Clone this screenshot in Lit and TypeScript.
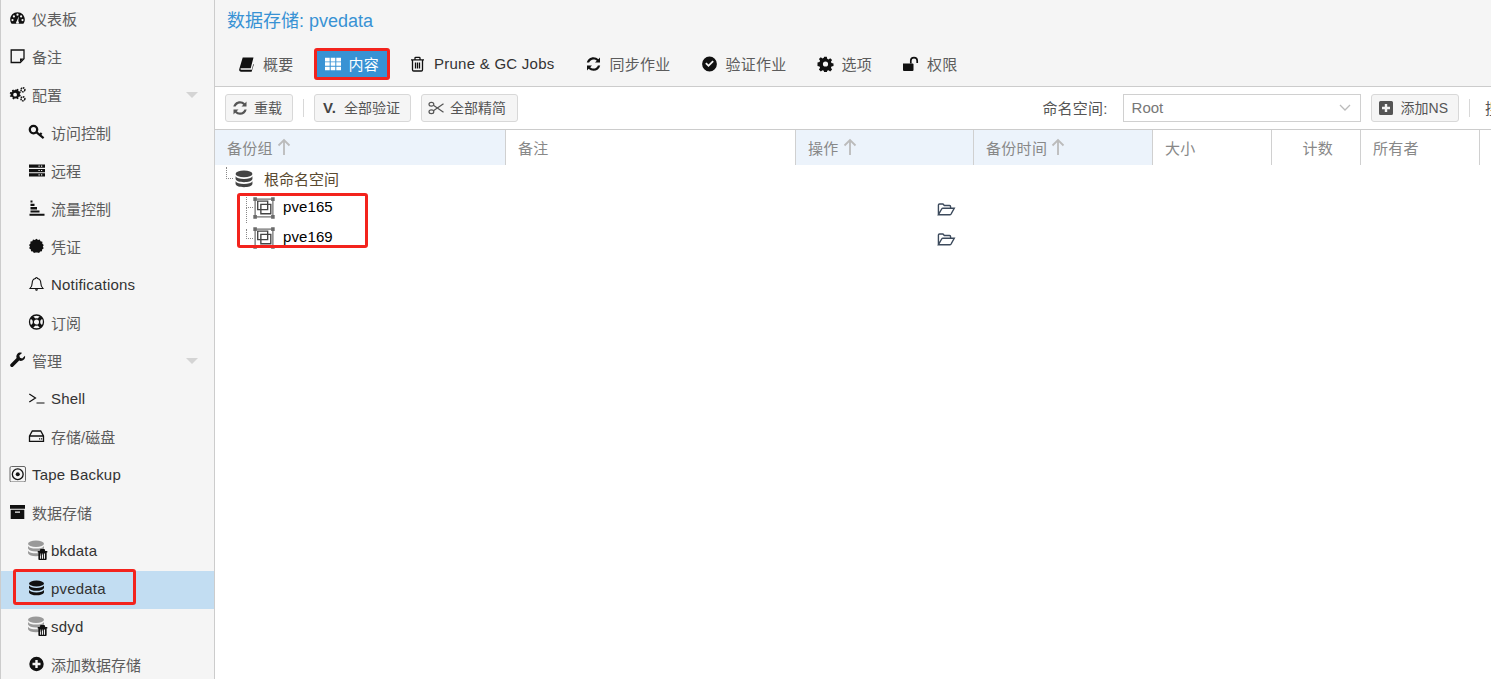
import { LitElement, html, css, svg } from "lit";
import { customElement } from "lit/decorators.js";

const I: Record<string, any> = {
  gauge: svg`<path fill-rule="evenodd" d="M8 2.200C3.900 2.200.7 5.400.7 9.400c0 1.600.5 3.100 1.400 4.300h11.800c.9-1.200 1.400-2.700 1.400-4.300 0-4-3.200-7.200-7.300-7.200zM8 3.600a1.100 1.100 0 1 1 0 2.200 1.100 1.100 0 0 1 0-2.200zM4.400 5.300a1.100 1.100 0 1 1 0 2.200 1.100 1.100 0 0 1 0-2.200zm7.200 0a1.100 1.100 0 1 1 0 2.200 1.100 1.100 0 0 1 0-2.200zM3 9a1.100 1.100 0 1 1 0 2.200A1.100 1.100 0 0 1 3 9zm10 0a1.100 1.100 0 1 1 0 2.200A1.100 1.100 0 0 1 13 9zM9.300 6.300l-.5 5a1.400 1.400 0 1 1-1.600 0z"/>`,
  note: svg`<path fill="none" stroke="currentColor" stroke-width="1.300" d="M1.700 2h12.800v8.800l-3.700 3.700H1.700z"/><path d="M10.500 14v-3.500H14z"/>`,
  gears: svg`<path d="M6 3.500l1 .3.6-1 1.500.8-.4 1.100.9.9 1.100-.3.6 1.500-1 .6v1.200l1 .6-.6 1.500-1.100-.3-.9.9.4 1.100-1.500.8-.6-1-1 .3-1 0-.6 1-1.500-.8.4-1.100-.9-.9-1.100.3L.2 9.900l1-.6V8.100l-1-.6.6-1.500 1.100.3.9-.9-.4-1.100 1.500-.8.6 1z"/><circle cx="5.600" cy="8.700" r="1.900" fill="#f5f5f5"/><circle cx="13.400" cy="3.800" r="2" fill="none" stroke="currentColor" stroke-width="1.500" stroke-dasharray="1.500 .6"/><circle cx="13.400" cy="12.800" r="2" fill="none" stroke="currentColor" stroke-width="1.500" stroke-dasharray="1.500 .6"/>`,
  key: svg`<circle cx="5" cy="5.600" r="3.700" fill="none" stroke="currentColor" stroke-width="2.300"/><path fill="none" stroke="currentColor" stroke-width="2.200" d="M7.800 8.200l7.300 6M11.300 11l1.800-1.900"/>`,
  server: svg`<path fill-rule="evenodd" d="M.5 2.500h16v3.300H.5zm0 4.400h16v3.300H.5zm0 4.400h16v3.300H.5zM10 3.500v1.200h1.200V3.500zm2.500 0v1.200h1.200V3.500zM10 7.900v1.200h1.200V7.900zm2.500 0v1.200h1.200V7.900zM10 12.300v1.200h1.200v-1.200zm2.500 0v1.200h1.200v-1.200z"/>`,
  bars: svg`<path d="M2 .5h2v2H2zm0 3.200h4v2.300H2zm0 3.400h6.500v2.300H2zm0 3.300h9v2.200H2zM1 13.700h15v2H1z"/>`,
  cert: svg`<path d="M8 .8l1.500 1.300 1.800-.6.7 1.800 1.900.4-.1 2 1.500 1.300-1 1.600.9 1.700-1.600 1.100-.1 1.900-1.900.2-1 1.600-1.800-.7-1.600 0-1.800.7-1-1.600-1.900-.2-.1-1.900L.6 10.300l.9-1.700-1-1.700 1.500-1.300-.1-2 1.900-.4.7-1.800 1.800.6z"/>`,
  bell: svg`<path fill="none" stroke="currentColor" stroke-width="1.100" d="M8 1.500c-.6 0-1 .4-1 1-2.300.5-3.300 2.300-3.300 4.500 0 3-1 4.200-2.200 5.500h13c-1.200-1.300-2.200-2.500-2.200-5.500 0-2.200-1-4-3.300-4.500 0-.6-.4-1-1-1z"/><path d="M6.500 13.300h3c0 .9-.7 1.500-1.500 1.500s-1.500-.6-1.500-1.500z"/>`,
  life: svg`<circle cx="8" cy="8" r="7" fill="none" stroke="currentColor" stroke-width="1.300"/><circle cx="8" cy="8" r="3.200" fill="none" stroke="currentColor" stroke-width="1.300"/><path stroke="currentColor" stroke-width="3.400" d="M3 3l2.700 2.700M13 3l-2.700 2.700M3 13l2.700-2.700M13 13l-2.700-2.700"/>`,
  wrench: svg`<path d="M15.500 3.800l-2.800 2.700-2.200-.7-.7-2.200L12.500.9C10.800.2 8.900.6 7.800 2c-1 1.100-1.200 2.600-.7 4L1.200 12c-.7.7-.7 1.800 0 2.500.7.7 1.800.7 2.500 0L9.700 8.600c1.700.7 3.600.2 4.800-1.100 1-1 1.300-2.400 1-3.700z"/>`,
  shell: svg`<path fill="none" stroke="currentColor" stroke-width="1.200" d="M.8 4l6.200 4-6.200 4M8 13h8"/>`,
  hdd: svg`<path fill="none" stroke="currentColor" stroke-width="1.300" d="M1 8L3.800 3h8.400L15 8v5.300H1zM1 8h14"/><path d="M10.500 10.300h1.200v1.200h-1.200zm2 0h1.200v1.200h-1.200z"/>`,
  tape: svg`<rect x=".5" y=".5" width="15.500" height="15.500" rx="1.500" fill="none" stroke="#666" stroke-width="1"/><circle cx="8.250" cy="8.250" r="5.400" fill="none" stroke="currentColor" stroke-width="1.300"/><circle cx="8.250" cy="8.250" r="2"/>`,
  archive: svg`<path fill-rule="evenodd" d="M.5 1h15v3.800H.5zM1.200 5.800h13.600V15H1.200zM5.500 7.500v1.300h5V7.500z"/>`,
  db: svg`<ellipse cx="8" cy="3.500" rx="7.500" ry="3"/><path d="M.5 5.600c1 1.700 3.700 2.400 7.500 2.400s6.500-.7 7.500-2.400v2.400C14.800 9.900 11.800 10.800 8 10.800S1.200 9.900.5 8zM.5 10c1 1.700 3.700 2.400 7.500 2.400s6.500-.7 7.500-2.400v2.500C14.800 14.400 11.800 15.300 8 15.300S1.200 14.400.5 12.500z"/>`,
  plusc: svg`<path fill-rule="evenodd" d="M8 .8a7.200 7.200 0 1 1 0 14.400A7.200 7.200 0 0 1 8 .8zM6.800 4v2.800H4v2.400h2.800V12h2.400V9.200H12V6.800H9.200V4z"/>`,
  book: svg`<path d="M4.200 1.500H15l-2.800 10.700H2.900c-.7 0-1 .4-1 .8s.4.8 1 .8h10.400l1.500-5.700.5.5-2.200 7.200H2.700C1.300 15.700.4 14.600.7 13.200z"/>`,
  grid: svg`<path fill-rule="evenodd" d="M.5 1.800h4.700v3.600H.5zm5.700 0h4.600v3.600H6.200zm5.600 0h4.700v3.600h-4.700zM.5 6.300h4.700v3.500H.5zm5.700 0h4.600v3.500H6.200zm5.600 0h4.700v3.500h-4.700zM.5 10.700h4.700v3.600H.5zm5.700 0h4.600v3.600H6.200zm5.600 0h4.700v3.600h-4.700z"/>`,
  trash: svg`<path fill="none" stroke="currentColor" stroke-width="1.300" d="M3 4.500v9.300c0 .7.500 1.200 1.200 1.200h7.600c.7 0 1.200-.5 1.200-1.200V4.500M1.500 3.800h13M5.500 3.500V2c0-.4.300-.7.700-.7h3.600c.4 0 .7.300.7.700v1.500M6 6.500v6M8 6.500v6M10 6.500v6"/>`,
  trashf: svg`<path fill-rule="evenodd" d="M1 3h14v2H14v9.500c0 .8-.7 1.500-1.500 1.500h-9C2.700 16 2 15.300 2 14.500V5H1zM5 0h6l1 3H4zM4.500 6.500v7.500h1.500V6.500zm2.800 0v7.500h1.500V6.500zm2.800 0v7.500h1.500V6.500z"/>`,
  refresh: svg`<path d="M14.500 1.500v5h-5l1.800-1.800C10.500 3.900 9.300 3.400 8 3.400c-2 0-3.800 1.300-4.400 3.200H1.300C2 3.400 4.700 1.200 8 1.200c1.900 0 3.600.8 4.900 2zM1.500 14.500v-5h5l-1.800 1.800c.8.8 2 1.300 3.300 1.300 2 0 3.800-1.300 4.400-3.200h2.300C14 13 11.300 14.800 8 14.800c-1.900 0-3.600-.8-4.900-2z"/>`,
  check: svg`<path fill-rule="evenodd" d="M8 .6a7.400 7.400 0 1 1 0 14.800A7.400 7.400 0 0 1 8 .6zm4.300 5.200L11 4.500 7 8.500 5 6.500 3.700 7.800 7 11.100z"/>`,
  gear: svg`<path fill-rule="evenodd" d="M6.700.8h2.600l.4 2 1.300.6 1.700-1.200 1.900 1.900-1.200 1.700.6 1.300 2 .4v2.600l-2 .4-.6 1.300 1.200 1.700-1.900 1.900-1.700-1.200-1.300.6-.4 2H6.700l-.4-2-1.300-.6-1.700 1.200-1.900-1.900 1.200-1.700-.6-1.300-2-.4V6.500l2-.4.6-1.300-1.200-1.700 1.900-1.900L5 2.400l1.300-.6zM8 5.400a2.600 2.600 0 1 0 0 5.200 2.600 2.600 0 0 0 0-5.200z"/>`,
  unlock: svg`<path d="M.5 7.500h9.500a1 1 0 0 1 1 1v5.500a1 1 0 0 1-1 1H1.500a1 1 0 0 1-1-1z"/><path fill="none" stroke="currentColor" stroke-width="1.700" d="M8.300 7.500V4.800a3.200 3.200 0 0 1 6.400 0V7"/>`,
  scissors: svg`<g fill="none" stroke="currentColor" stroke-width="1.200"><ellipse cx="3.400" cy="4.300" rx="2.400" ry="1.900"/><ellipse cx="3.400" cy="11.700" rx="2.400" ry="1.900"/><path d="M5.400 5.300l10.100 7M5.400 10.700L15.500 3.700"/></g>`,
  plussq: svg`<path fill-rule="evenodd" d="M2.500 1h11A1.500 1.500 0 0 1 15 2.500v11a1.500 1.500 0 0 1-1.500 1.500h-11A1.500 1.500 0 0 1 1 13.500v-11A1.500 1.500 0 0 1 2.500 1zM6.800 4v2.800H4v2.400h2.800V12h2.400V9.200H12V6.800H9.200V4z"/>`,
  group: svg`<rect x="2" y="2" width="17" height="17" fill="none" stroke="#555" stroke-width="1"/><path d="M4.500 4h9.500v8H4.500zM7.500 7h9.500v9H7.500z" fill="none" stroke="#444" stroke-width="1.300"/><path fill="#6b6b6b" d="M.3.300h3.400v3.400H.3zM17.300.300h3.400v3.400h-3.400zM.3 17.300h3.400v3.400H.3zM17.300 17.300h3.400v3.400h-3.400z"/>`,
  folder: svg`<path fill="none" stroke="#3c4a5c" stroke-width="1.300" d="M1 11.500V2.800c0-.6.400-1 1-1h3.200l1.300 1.500h4.800c.6 0 1 .4 1 1v1.500M1 11.800l3-5.300c.3-.5.7-.7 1.200-.7h10.500l-3 5.400c-.3.400-.6.600-1.100.6H1z"/>`,
};

const icon = (n: string, w = 17, h = 16, vb = "0 0 16 16") =>
  html`<svg class="ic" width=${w} height=${h} viewBox=${vb} fill="currentColor">${I[n]}</svg>`;

interface Nav { i: string; t: string; l: number; c?: boolean; sel?: boolean; stack?: boolean }
const NAV: Nav[] = [
  { i: "gauge", t: "仪表板", l: 0 },
  { i: "note", t: "备注", l: 0 },
  { i: "gears", t: "配置", l: 0, c: true },
  { i: "key", t: "访问控制", l: 1 },
  { i: "server", t: "远程", l: 1 },
  { i: "bars", t: "流量控制", l: 1 },
  { i: "cert", t: "凭证", l: 1 },
  { i: "bell", t: "Notifications", l: 1 },
  { i: "life", t: "订阅", l: 1 },
  { i: "wrench", t: "管理", l: 0, c: true },
  { i: "shell", t: "Shell", l: 1 },
  { i: "hdd", t: "存储/磁盘", l: 1 },
  { i: "tape", t: "Tape Backup", l: 0 },
  { i: "archive", t: "数据存储", l: 0 },
  { i: "db", t: "bkdata", l: 1, stack: true },
  { i: "db", t: "pvedata", l: 1, sel: true },
  { i: "db", t: "sdyd", l: 1, stack: true },
  { i: "plusc", t: "添加数据存储", l: 1 },
];

const TABS = [
  { i: "book", t: "概要" },
  { i: "grid", t: "内容", active: true },
  { i: "trash", t: "Prune & GC Jobs" },
  { i: "refresh", t: "同步作业" },
  { i: "check", t: "验证作业" },
  { i: "gear", t: "选项" },
  { i: "unlock", t: "权限" },
];

const COLS = [
  { t: "备份组", w: 291, s: true },
  { t: "备注", w: 290 },
  { t: "操作", w: 178, s: true },
  { t: "备份时间", w: 179, s: true },
  { t: "大小", w: 119 },
  { t: "计数", w: 89, r: true },
  { t: "所有者", w: 119 },
];

@customElement("app-root")
export class AppRoot extends LitElement {
  static styles = css`
    :host { display: block; position: relative; width: 1491px; height: 679px; overflow: hidden; background: #fff;
      font-family: "Liberation Sans", "Noto Sans CJK SC", Arial, sans-serif; font-size: 15px; color: #555; }
    .page { display: flex; height: 679px; }
    .ic { display: block; flex: none; }
    .side { width: 215px; flex: none; box-sizing: border-box; background: #f5f5f5; border-left: 1px solid #ccc; border-right: 1px solid #ccc; overflow: hidden; padding-top: 1px; }
    .row { height: 38px; display: flex; align-items: center; position: relative; box-sizing: border-box; padding-bottom: 4px; }
    .row.l0 { padding-left: 8px; }
    .row.l1 { padding-left: 27px; }
    .row.sel { background: #c2ddf2; }
    .row .ic { color: #111; margin-right: 6px; }
    .row .txt { color: #5c5c5c; }
    .row .en { color: #333; letter-spacing: .2px; }
    .caret { position: absolute; left: 185px; top: 15px; width: 0; height: 0; border-left: 6px solid transparent; border-right: 6px solid transparent; border-top: 6px solid #d4d4d4; }
    .stack { position: relative; width: 17px; height: 16px; margin-right: 6px; flex: none; }
    .stack .ic { color: #999; margin: 0; position: absolute; left: -1px; top: -2px; }
    .stack .ic + .ic { color: #111; left: 9px; top: 6px; width: 11px; height: 13px; }
    .main { flex: 1; min-width: 0; display: flex; flex-direction: column; }
    .head { background: #f5f5f5; height: 87px; box-sizing: border-box; border-bottom: 1px solid #ccc; }
    .title { color: #3892d4; font-size: 18px; height: 47px; box-sizing: border-box; padding: 10px 0 0 12px; line-height: 22px; }
    .tabs { display: flex; gap: 16px; padding-left: 16px; }
    .tab { display: flex; align-items: center; gap: 8px; height: 28px; margin-top: 3px; padding: 0 7px 0 7px; color: #5c5c5c; letter-spacing: .25px; }
    .tab span { margin-bottom: 2px; }
    .tab .ic { color: #111; }
    .tab.en { color: #333; }
    .tab.active { background: #3892d4; color: #fff; padding-right: 9px; margin-right: -2px; }
    .tab.active .ic { color: #fff; }
    .bar { height: 43px; box-sizing: border-box; border-bottom: 1px solid #ccc; display: flex; align-items: center; padding: 0 0 1px 10px; font-size: 14px; overflow: hidden; white-space: nowrap; }
    .btn { height: 28px; box-sizing: border-box; border: 1px solid #d8d8d8; border-radius: 3px; background: #f5f5f5; display: flex; align-items: center; gap: 6px; padding: 0 10px 0 6px; color: #555; flex: none; }
    .btn span { margin-bottom: 2px; }
    .btn .ic { color: #555; }
    .btn b { width: 17px; text-align: center; font: bold 15px "Liberation Sans", sans-serif; color: #444; }
    .btn.w { padding-right: 11px; }
    .btn.ns { gap: 7px; }
    .sep { width: 1px; height: 18px; background: #d8d8d8; flex: none; margin: 0 10px; }
    .gap { width: 10px; flex: none; }
    .sp { flex: 1; }
    .lbl { margin-right: 15px; color: #555; font-size: 15px; letter-spacing: .2px; }
    .search { margin-left: 5px; width: 6px; overflow: hidden; flex: none; color: #555; font-size: 15px; }
    .combo { width: 238px; height: 28px; box-sizing: border-box; border: 1px solid #d0d0d0; display: flex; align-items: center; justify-content: space-between; padding: 0 9px 0 8px; margin-right: 10px; color: #777; font-size: 15px; flex: none; }
    .cols { display: flex; height: 35px; flex: none; }
    .col { box-sizing: border-box; border-right: 1px solid #d0d0d0; display: flex; align-items: center; gap: 4px; padding: 0 11px 1px 12px; color: #888; font-size: 15px; letter-spacing: .3px; }
    .col.s { background: #ecf3fb; }
    .col.r { justify-content: flex-end; padding-right: 27px; }
    .col .ic { color: #bbb; }
    .tree { position: relative; display: flex; flex-direction: column; }
    .tr { display: flex; align-items: center; position: relative; }
    .tr.r0 { height: 28px; padding-left: 20px; color: #5a4a30; }
    .tr.r0 > span:last-child { margin-bottom: 2px; }
    .tr.r1 { height: 30px; padding-left: 38px; color: #000; }
    .tr.r1 .name { margin-bottom: 4px; letter-spacing: .1px; }
    .tr.r0 .ic { margin-right: 11px; color: #444; }
    .tr.r1 .ic { margin-right: 8px; }
    .fold { position: absolute; left: 722px; top: 9px; }
    .tr.r1 .fold .ic { margin: 0; }
    .dots { position: absolute; border-left: 1px dotted #888; border-bottom: 1px dotted #888; }
    .vline { position: absolute; left: 31px; top: 14px; height: 16px; border-left: 1px dotted #888; }
    .red { position: absolute; box-sizing: border-box; border: 3px solid #f3231d; border-radius: 3px; pointer-events: none; }
    .r1box { left: 13px; top: 569px; width: 123px; height: 36px; }
    .r2box { left: 314px; top: 48px; width: 76px; height: 32px; }
    .r3box { left: 237px; top: 193px; width: 131px; height: 55px; }
  `;

  render() {
    return html`
      <div class="page">
        <nav class="side">
          ${NAV.map(n => html`
            <div class="row l${n.l} ${n.sel ? "sel" : ""}">
              ${n.stack
                ? html`<span class="stack">${icon("db", 18, 17)}${icon("trashf", 11, 13)}</span>`
                : icon(n.i)}
              <span class="${/^[A-Za-z]/.test(n.t) ? "en" : "txt"}">${n.t}</span>
              ${n.c ? html`<span class="caret"></span>` : ""}
            </div>`)}
        </nav>
        <main class="main">
          <div class="head">
            <div class="title">数据存储: pvedata</div>
            <div class="tabs">
              ${TABS.map(t => html`
                <div class="tab ${t.active ? "active" : ""} ${/^P/.test(t.t) ? "en" : ""}">
                  ${icon(t.i)}<span>${t.t}</span>
                </div>`)}
            </div>
          </div>
          <div class="bar">
            <div class="btn">${icon("refresh", 16, 16)}<span>重载</span></div>
            <span class="sep"></span>
            <div class="btn"><b>V.</b><span>全部验证</span></div>
            <span class="gap"></span>
            <div class="btn w">${icon("scissors", 16, 16)}<span>全部精简</span></div>
            <span class="sp"></span>
            <span class="lbl">命名空间:</span>
            <div class="combo"><span>Root</span>
              <svg width="12" height="8" viewBox="0 0 12 8" fill="none" stroke="#bbb" stroke-width="1.300"><path d="M1 1l5 5 5-5"/></svg>
            </div>
            <div class="btn ns">${icon("plussq", 16, 16)}<span>添加NS</span></div>
            <span class="sep"></span>
            <span class="search">搜索</span>
          </div>
          <div class="cols">
            ${COLS.map(c => html`
              <div class="col ${c.s ? "s" : ""} ${c.r ? "r" : ""}" style="width:${c.w}px">
                <span>${c.t}</span>
                ${c.s ? html`<svg class="ic" width="14" height="18" viewBox="0 0 14 18" fill="none" stroke="currentColor" stroke-width="1.800"><path d="M7 17V2M1.500 7.500L7 2l5.500 5.500"/></svg>` : ""}
              </div>`)}
          </div>
          <div class="tree">
            <div class="tr r0">
              <span class="dots" style="left:11px;top:2px;width:6px;height:11px"></span>
              ${icon("db", 18, 20, "0 0 16 16")}<span>根命名空间</span>
            </div>
            ${["pve165", "pve169"].map((p, i) => html`
              <div class="tr r1">
                <span class="dots" style="left:31px;top:${i ? 6 : 2}px;width:6px;height:${i ? 9 : 12}px"></span>
                ${i ? "" : html`<span class="vline"></span>`}
                ${icon("group", 22, 22, "0 0 21 21")}<span class="name">${p}</span>
                <span class="fold">${icon("folder", 19, 14, "0 0 17 13")}</span>
              </div>`)}
          </div>
        </main>
      </div>
      <div class="red r1box"></div>
      <div class="red r2box"></div>
      <div class="red r3box"></div>
    `;
  }
}
